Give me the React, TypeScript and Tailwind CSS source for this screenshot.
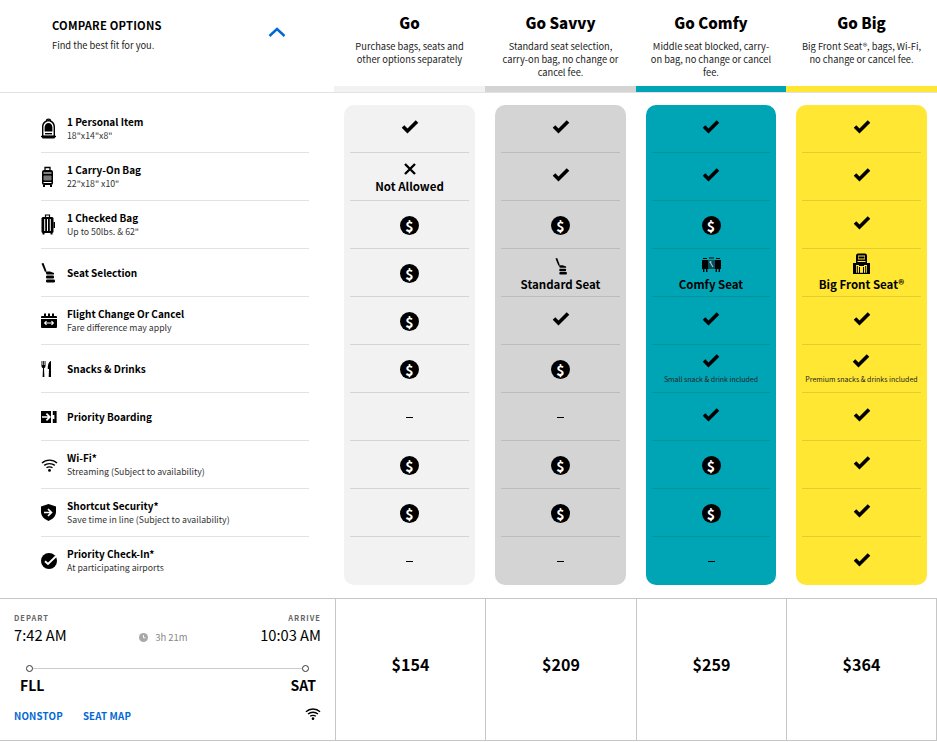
import type { ReactNode } from 'react';

const FONT = "font-['Noto_Sans_CJK_SC','Source_Sans_Pro','Noto_Sans',sans-serif]";

function CheckIcon() {
  return (
    <svg width="18" height="15" viewBox="0 0 18 15" className="block">
      <path d="M2 7.5 L6.5 12 L16 2.5" fill="none" stroke="#000" strokeWidth="3.6" />
    </svg>
  );
}

function CrossIcon() {
  return (
    <svg width="12" height="12" viewBox="0 0 12 12" className="block">
      <path d="M1 1 L11 11 M11 1 L1 11" fill="none" stroke="#000" strokeWidth="2.4" />
    </svg>
  );
}

function DollarIcon() {
  return (
    <span className="flex h-[19px] w-[19px] items-center justify-center rounded-full bg-black text-[14px] font-bold leading-none text-white">
      $
    </span>
  );
}

function Backpack() {
  return (
    <svg width="15" height="21" viewBox="0 0 15 21">
      <path d="M5.5 3 C5.5 0.6 9.5 0.6 9.5 3" fill="none" stroke="#000" strokeWidth="1.2" />
      <path fillRule="evenodd" d="M7.5 2 C11.5 2 14 5 14 9 V19 C14 20 13.5 20.5 12.5 20.5 H2.5 C1.5 20.5 1 20 1 19 V9 C1 5 3.5 2 7.5 2 Z M7.5 3.6 C4.5 3.6 2.4 6 2.4 9.5 V17.5 H12.6 V9.5 C12.6 6 10.5 3.6 7.5 3.6 Z" />
      <path d="M7.5 5 C5.3 5 3.6 7 3.6 9.5 V13.5 H11.4 V9.5 C11.4 7 9.7 5 7.5 5 Z" />
      <rect x="4" y="15" width="7" height="1.4" />
      <rect x="0" y="17.8" width="15" height="1.4" />
    </svg>
  );
}

function CarryOn() {
  return (
    <svg width="13" height="21" viewBox="0 0 13 21">
      <path d="M4 4 V1.5 H9 V4" fill="none" stroke="#000" strokeWidth="1.3" />
      <rect x="1" y="4" width="11" height="15" rx="2" />
      <rect x="2.5" y="6.5" width="8" height="1" fill="#fff" />
      <rect x="2.5" y="9.5" width="8" height="5" rx="1" fill="#777" />
      <rect x="2.5" y="16" width="8" height="1" fill="#fff" />
      <rect x="2" y="19" width="2" height="2" />
      <rect x="9" y="19" width="2" height="2" />
    </svg>
  );
}

function CheckedBag() {
  return (
    <svg width="14" height="21" viewBox="0 0 14 21">
      <path d="M4.5 3 V1 H8.5 V3" fill="none" stroke="#000" strokeWidth="1.2" />
      <rect x="0.5" y="3" width="12" height="16" rx="1.5" />
      <rect x="3.2" y="5" width="1" height="12" fill="#fff" />
      <rect x="6" y="5" width="1" height="12" fill="#fff" />
      <rect x="8.8" y="5" width="1" height="12" fill="#fff" />
      <rect x="12.5" y="8" width="1.5" height="6" />
      <rect x="1.5" y="19" width="2" height="1.5" />
      <rect x="9.5" y="19" width="2" height="1.5" />
    </svg>
  );
}

function SeatIcon({ w = 14, h = 20 }: { w?: number; h?: number }) {
  return (
    <svg width={w} height={h} viewBox="0 0 14 20">
      <path d="M0.5 0.5 L2.5 0 L5.5 8 L4 9 Z" />
      <path d="M4.5 8.5 H9 L13 10 V11.5 H5.5 Z" />
      <rect x="5" y="12.5" width="8" height="3" rx="1" />
      <rect x="5" y="16.5" width="9" height="3" rx="1.2" />
    </svg>
  );
}

function CalendarIcon() {
  return (
    <svg width="16" height="15" viewBox="0 0 16 15">
      <rect x="0" y="3" width="16" height="12" rx="1" />
      <rect x="3" y="0.5" width="2" height="3.5" />
      <rect x="7" y="0.5" width="2" height="3.5" />
      <rect x="11" y="0.5" width="2" height="3.5" />
      <rect x="0" y="5" width="16" height="1" fill="#fff" />
      <path d="M4 10 H12 M5.5 8.2 L3.7 10 L5.5 11.8 M10.5 8.2 L12.3 10 L10.5 11.8" fill="none" stroke="#fff" strokeWidth="1.2" />
    </svg>
  );
}

function ForkKnife() {
  return (
    <svg width="11" height="16" viewBox="0 0 11 16">
      <path d="M0.5 0 V5 C0.5 6.5 1.5 7 2 7.3 L1.6 16 H3.4 L3 7.3 C3.5 7 4.5 6.5 4.5 5 V0 H3.6 V4 H2.9 V0 H2.1 V4 H1.4 V0 Z" />
      <path d="M10 0 C8 0.5 6.8 3 6.8 8 H8 L7.7 16 H10 Z" />
    </svg>
  );
}

function BoardingIcon() {
  return (
    <svg width="16" height="12" viewBox="0 0 16 12">
      <rect x="0" y="0" width="10" height="12" />
      <path d="M1 6 H8.5 M5.4 2.6 L8.8 6 L5.4 9.4" fill="none" stroke="#fff" strokeWidth="1.7" />
      <rect x="13.4" y="0" width="2.2" height="12" />
      <rect x="11.8" y="0" width="2" height="4" />
      <rect x="11.8" y="8" width="2" height="4" />
    </svg>
  );
}

function WifiIcon({ size = 17 }: { size?: number }) {
  return (
    <svg width={size} height={(size * 14) / 17} viewBox="0 0 17 14">
      <path d="M1 5 C5 1.2 12 1.2 16 5 M3.2 7.4 C6 5 11 5 13.8 7.4 M5.5 9.8 C7 8.6 10 8.6 11.5 9.8" fill="none" stroke="#000" strokeWidth="1.4" />
      <circle cx="8.5" cy="12.4" r="1.4" />
    </svg>
  );
}

function ShieldIcon() {
  return (
    <svg width="15" height="17" viewBox="0 0 15 17">
      <path d="M7.5 0 L15 2.5 V8 C15 12.5 11 15.5 7.5 17 C4 15.5 0 12.5 0 8 V2.5 Z" />
      <path d="M3 8.5 H10 M7 5 L10.5 8.5 L7 12" fill="none" stroke="#fff" strokeWidth="1.7" />
    </svg>
  );
}

function CheckCircle() {
  return (
    <svg width="16" height="16" viewBox="0 0 16 16">
      <circle cx="8" cy="8" r="8" />
      <path d="M4 8.2 L7 11 L15 3.2" fill="none" stroke="#fff" strokeWidth="1.9" />
    </svg>
  );
}

function ComfySeat() {
  return (
    <svg width="19" height="15" viewBox="0 0 19 15" className="mb-[3px]">
      <rect x="0" y="3" width="6" height="9" />
      <rect x="13" y="3" width="6" height="9" />
      <rect x="6" y="3" width="7" height="9" fill="#0a4f58" />
      <path d="M1 1.5 H5 M14 1.5 H18 M7 1 H12" stroke="#000" strokeWidth="1.2" />
      <path d="M8 5 L11 10" stroke="#7fd0d8" strokeWidth="1.2" />
      <circle cx="8.5" cy="5" r="1.1" fill="#7fd0d8" />
      <rect x="1" y="12" width="1.4" height="3" />
      <rect x="4" y="12" width="1.4" height="3" />
      <rect x="13.6" y="12" width="1.4" height="3" />
      <rect x="16.6" y="12" width="1.4" height="3" />
    </svg>
  );
}

function BigSeat() {
  return (
    <svg width="17" height="21" viewBox="0 0 17 21" className="mb-[1px]">
      <path fillRule="evenodd" d="M5 0.5 H12 C13.3 0.5 14 1.5 14 3 V9 H12.5 V8 H4.5 V9 H3 V3 C3 1.5 3.7 0.5 5 0.5 Z M5 2.5 V6.5 H12 V2.5 Z" />
      <rect x="5.5" y="3.5" width="6" height="2" />
      <rect x="3" y="9" width="11" height="3" />
      <rect x="0" y="10" width="3" height="11" />
      <rect x="14" y="10" width="3" height="11" />
      <rect x="3.8" y="13" width="1" height="8" />
      <rect x="6" y="12" width="5" height="1" />
      <rect x="6" y="14" width="1" height="7" />
      <rect x="10" y="14" width="1" height="7" />
      <rect x="12.2" y="13" width="1" height="8" />
      <rect x="3" y="19.8" width="11" height="1.2" />
    </svg>
  );
}

type Cell =
  | { kind: 'check'; note?: string }
  | { kind: 'dollar' }
  | { kind: 'dash' }
  | { kind: 'cross'; label: string }
  | { kind: 'seat'; icon: ReactNode; label: ReactNode };

const check: Cell = { kind: 'check' };
const dollar: Cell = { kind: 'dollar' };
const dash: Cell = { kind: 'dash' };

const features: { icon: ReactNode; title: string; sub?: string }[] = [
  { icon: <Backpack />, title: '1 Personal Item', sub: '18"x14"x8"' },
  { icon: <CarryOn />, title: '1 Carry-On Bag', sub: '22"x18" x10"' },
  { icon: <CheckedBag />, title: '1 Checked Bag', sub: 'Up to 50lbs. & 62"' },
  { icon: <SeatIcon />, title: 'Seat Selection' },
  { icon: <CalendarIcon />, title: 'Flight Change Or Cancel', sub: 'Fare difference may apply' },
  { icon: <ForkKnife />, title: 'Snacks & Drinks' },
  { icon: <BoardingIcon />, title: 'Priority Boarding' },
  { icon: <WifiIcon />, title: 'Wi-Fi*', sub: 'Streaming (Subject to availability)' },
  { icon: <ShieldIcon />, title: 'Shortcut Security*', sub: 'Save time in line (Subject to availability)' },
  { icon: <CheckCircle />, title: 'Priority Check-In*', sub: 'At participating airports' },
];

const plans: {
  name: string;
  desc: string;
  price: string;
  color: string;
  line: string;
  width: string;
  cells: Cell[];
}[] = [
  {
    name: 'Go',
    desc: 'Purchase bags, seats and other options separately',
    price: '$154',
    color: 'bg-[#f2f2f2]',
    line: 'border-[#d4d4d4]',
    width: 'w-[131px]',
    cells: [check, { kind: 'cross', label: 'Not Allowed' }, dollar, dollar, dollar, dollar, dash, dollar, dollar, dash],
  },
  {
    name: 'Go Savvy',
    desc: 'Standard seat selection, carry-on bag, no change or cancel fee.',
    price: '$209',
    color: 'bg-[#d4d4d4]',
    line: 'border-[#bcbcbc]',
    width: 'w-[131px]',
    cells: [check, check, dollar, { kind: 'seat', icon: <SeatIcon w={12} h={17} />, label: 'Standard Seat' }, check, dollar, dash, dollar, dollar, dash],
  },
  {
    name: 'Go Comfy',
    desc: 'Middle seat blocked, carry-on bag, no change or cancel fee.',
    price: '$259',
    color: 'bg-[#00a5b5]',
    line: 'border-[#0a919f]',
    width: 'w-[130px]',
    cells: [
      check,
      check,
      dollar,
      { kind: 'seat', icon: <ComfySeat />, label: 'Comfy Seat' },
      check,
      { kind: 'check', note: 'Small snack & drink included' },
      check,
      dollar,
      dollar,
      dash,
    ],
  },
  {
    name: 'Go Big',
    desc: 'Big Front Seat®, bags, Wi-Fi, no change or cancel fee.',
    price: '$364',
    color: 'bg-[#ffe733]',
    line: 'border-[#e3ce2f]',
    width: 'w-[131px]',
    cells: [
      check,
      check,
      check,
      { kind: 'seat', icon: <BigSeat />, label: 'Big Front Seat®' },
      check,
      { kind: 'check', note: 'Premium snacks & drinks included' },
      check,
      check,
      check,
      check,
    ],
  },
];

function CellContent({ cell }: { cell: Cell }) {
  if (cell.kind === 'check') {
    if (cell.note) {
      return (
        <div className="flex flex-col items-center pt-[1px]">
          <CheckIcon />
          <span className="mt-[5px] whitespace-nowrap text-[7px] leading-[12px] text-[#222]">{cell.note}</span>
        </div>
      );
    }
    return <div className="-mt-[4px]"><CheckIcon /></div>;
  }
  if (cell.kind === 'dollar') return <div className="mt-[2px]"><DollarIcon /></div>;
  if (cell.kind === 'dash') return <span className="mt-[1px] block h-[1px] w-[7px] bg-black" />;
  if (cell.kind === 'cross') {
    return (
      <div className="flex flex-col items-center pt-[3px]">
        <CrossIcon />
        <span className="mt-[4px] text-[11.5px] font-bold leading-[14px]">{cell.label}</span>
      </div>
    );
  }
  return (
    <div className="-mt-[1px] flex flex-col items-center">
      <div className="flex h-[21px] items-end">{cell.icon}</div>
      <span className="mt-[2px] text-[11.5px] font-bold leading-[14px]">{cell.label}</span>
    </div>
  );
}

export default function App() {
  return (
    <div className={`${FONT} h-[742px] w-[937px] overflow-hidden bg-white text-black`}>
      <div className="grid h-[93px] grid-cols-[334px_151px_151px_150px_151px] border-b border-[#e2e2e2]">
        <div className="relative pl-[52px] pt-[18px]">
          <div className="text-[11.2px] font-bold leading-[15px] tracking-[0.2px]">COMPARE OPTIONS</div>
          <div className="mt-[6px] text-[9.3px] leading-[13px] text-[#222]">Find the best fit for you.</div>
          <svg width="18" height="12" viewBox="0 0 18 12" className="absolute left-[268px] top-[26px]">
            <path d="M1.5 10 L9 3 L16.5 10" fill="none" stroke="#0067d6" strokeWidth="2.4" />
          </svg>
        </div>
        {plans.map((p) => (
          <div key={p.name} className="flex flex-col">
            <div className="flex-1 px-[14px] pt-[12px] text-center">
              <div className="text-[15px] font-black leading-[21px]">{p.name}</div>
              <div className="mt-[7px] text-[9.3px] leading-[13px] text-[#222]">{p.desc}</div>
            </div>
            <div className={`h-[6px] ${p.color}`} />
          </div>
        ))}
      </div>

      <div className="grid h-[505px] grid-cols-[334px_151px_151px_150px_151px] pt-[12px]">
        <div className="pl-[41px] pr-[25px]">
          {features.map((f, i) => (
            <div key={f.title} className={`flex h-[48px] items-center ${i < 9 ? 'border-b border-[#e2e2e2]' : ''}`}>
              <div className="flex w-[26px] shrink-0 justify-start">{f.icon}</div>
              <div>
                <div className="text-[10px] font-bold leading-[14px]">{f.title}</div>
                {f.sub && <div className="text-[8.75px] leading-[14px] text-[#333]">{f.sub}</div>}
              </div>
            </div>
          ))}
        </div>
        {plans.map((p) => (
          <div key={p.name} className="pl-[10px]">
            <div className={`h-[480px] ${p.width} rounded-[10px] px-[6px] ${p.color}`}>
              {p.cells.map((c, i) => (
                <div key={i} className={`flex h-[48px] items-center justify-center ${i < 9 ? `border-b ${p.line}` : ''}`}>
                  <CellContent cell={c} />
                </div>
              ))}
            </div>
          </div>
        ))}
      </div>

      <div className="grid h-[143px] grid-cols-[336px_150px_151px_150px_150px] border-y border-[#c6c6c6]">
        <div className="flex flex-col border-r border-[#c6c6c6] px-[14px] pt-[14px]">
          <div className="flex justify-between text-[7.5px] font-bold leading-[9px] tracking-[1px] text-[#666]">
            <span>DEPART</span>
            <span>ARRIVE</span>
          </div>
          <div className="mt-[1px] flex items-center justify-between text-[14.7px] leading-[18px]">
            <span>7:42 AM</span>
            <span className="mt-[5px] flex items-center gap-[7px] text-[9.5px] text-[#888]">
              <svg width="9" height="9" viewBox="0 0 9 9">
                <circle cx="4.5" cy="4.5" r="4.5" fill="#a8a8a8" />
                <path d="M4.5 2 V4.8 H6.5" fill="none" stroke="#fff" strokeWidth="0.9" />
              </svg>
              3h 21m
            </span>
            <span>10:03 AM</span>
          </div>
          <div className="mt-[19px] flex items-center px-[12px]">
            <span className="h-[7px] w-[7px] shrink-0 rounded-full border border-[#333]" />
            <span className="h-[1px] flex-1 bg-[#ccc]" />
            <span className="h-[7px] w-[7px] shrink-0 rounded-full border border-[#333]" />
          </div>
          <div className="mt-[4px] flex justify-between pl-[6px] pr-[5px] text-[14px] font-bold leading-[18px]">
            <span>FLL</span>
            <span>SAT</span>
          </div>
          <div className="mt-[16px] flex items-center text-[9.7px] font-bold leading-[13px] tracking-[0.2px] text-[#0067d6]">
            <span>NONSTOP</span>
            <span className="ml-[20px]">SEAT MAP</span>
            <span className="-mt-[6px] ml-auto"><WifiIcon size={16} /></span>
          </div>
        </div>
        {plans.map((p) => (
          <div key={p.name} className="flex items-center justify-center border-r border-[#c6c6c6] pb-[12px] text-[16px] font-bold">
            {p.price}
          </div>
        ))}
      </div>
    </div>
  );
}
